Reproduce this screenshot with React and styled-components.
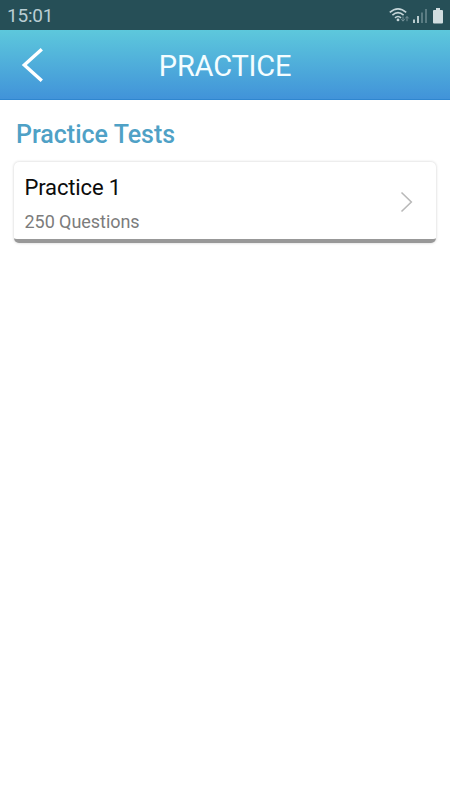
import React from "react";
import styled, { createGlobalStyle } from "styled-components";

const GlobalStyle = createGlobalStyle`
  * {
    box-sizing: border-box;
  }

  body {
    margin: 0;
    background: #ffffff;
    font-family: Roboto, "Liberation Sans", sans-serif;
  }
`;

const Screen = styled.div`
  display: flex;
  flex-direction: column;
  min-height: 800px;
`;

const StatusBar = styled.div`
  display: flex;
  align-items: center;
  justify-content: space-between;
  height: 30px;
  padding: 1px 7px 0;
  background: #264f57;
`;

const Clock = styled.span`
  color: #b9cdd3;
  font-size: 19px;
  letter-spacing: -0.2px;
  line-height: 30px;
`;

const StatusIcons = styled.svg`
  display: block;
  width: 55px;
  height: 18px;
`;

const Header = styled.header`
  display: grid;
  grid-template-columns: 66px 1fr 66px;
  align-items: center;
  height: 70px;
  background: linear-gradient(#5dc8dc, #4193d9);
  border-bottom: 1px solid #2f86cf;
`;

const BackButton = styled.button`
  display: flex;
  padding: 0 0 0 20px;
  border: none;
  background: none;
  cursor: pointer;
`;

const Title = styled.h1`
  margin: 0;
  padding-top: 3px;
  color: #f4fdff;
  font-size: 29px;
  font-weight: 400;
  letter-spacing: -0.2px;
  line-height: 36px;
  text-align: center;
`;

const Content = styled.main`
  padding: 19px 14px;
`;

const SectionTitle = styled.h2`
  margin: 0 0 11px 2px;
  color: #4fa1c6;
  font-size: 25px;
  font-weight: 500;
  line-height: 32px;
`;

const Card = styled.div`
  display: flex;
  align-items: center;
  justify-content: space-between;
  height: 81px;
  padding: 3px 23px 0 10.5px;
  background: #ffffff;
  border-bottom: 4px solid #989898;
  border-radius: 5px;
  box-shadow: 0 0 3px rgba(0, 0, 0, 0.2);
`;

const CardText = styled.div`
  display: flex;
  flex-direction: column;
  gap: 8px;
  padding-top: 4px;
`;

const TestName = styled.span`
  color: #0c0c0c;
  font-size: 22px;
  letter-spacing: -0.15px;
  line-height: 28px;
`;

const QuestionCount = styled.span`
  color: #7c7c7c;
  font-size: 18px;
  letter-spacing: -0.05px;
  line-height: 24px;
`;

const TESTS = [{ name: "Practice 1", questions: 250 }];

const App = () => {
  return (
    <Screen>
      <GlobalStyle />
      <StatusBar>
        <Clock>15:01</Clock>
        <StatusIcons viewBox="0 0 55 18">
          {/* wifi */}
          <g fill="none" stroke="#c5d5d8" strokeWidth="1.6">
            <path d="M1.8 5.4 Q10 -1.8 18.2 5.4" />
            <path d="M4.4 8.2 Q10 3.2 15.6 8.2" />
            <path d="M7 10.8 Q10 8.2 13 10.8" />
          </g>
          <circle cx="10" cy="12.9" r="1.4" fill="#c5d5d8" />
          {/* data arrows */}
          <path
            d="M15 9.5 V14 M13.3 12.3 L15 14.2 L16.7 12.3 M19 14.2 V9.7 M17.3 11.4 L19 9.5 L20.7 11.4"
            fill="none"
            stroke="#76939a"
            strokeWidth="1"
          />
          {/* signal */}
          <path d="M25 12.5h2v3.5h-2z M29 9h2v7h-2z" fill="#b9cccf" />
          <path d="M33 5.5h2v10.5h-2z M37 2h2v14h-2z" fill="#5b7c83" />
          {/* battery */}
          <path
            d="M48 1h4v2h2a1 1 0 0 1 1 1v11.5a1 1 0 0 1 -1 1h-8a1 1 0 0 1 -1 -1v-11.5a1 1 0 0 1 1 -1h2z"
            fill="#d1dde0"
          />
        </StatusIcons>
      </StatusBar>
      <Header>
        <BackButton aria-label="Back">
          <svg width="26" height="38" viewBox="0 0 26 38">
            <path
              d="M21.8 3.2 L4.3 19 L21.8 34.8"
              fill="none"
              stroke="#ffffff"
              strokeWidth="3.4"
            />
          </svg>
        </BackButton>
        <Title>PRACTICE</Title>
      </Header>
      <Content>
        <SectionTitle>Practice Tests</SectionTitle>
        {TESTS.map((test) => {
          return (
            <Card key={test.name}>
              <CardText>
                <TestName>{test.name}</TestName>
                <QuestionCount>{`${test.questions} Questions`}</QuestionCount>
              </CardText>
              <svg width="13" height="22" viewBox="0 0 13 22">
                <path
                  d="M1.5 1.5 L11.3 11 L1.5 20.5"
                  fill="none"
                  stroke="#b9b9b9"
                  strokeWidth="1.6"
                />
              </svg>
            </Card>
          );
        })}
      </Content>
    </Screen>
  );
};

export default App;
